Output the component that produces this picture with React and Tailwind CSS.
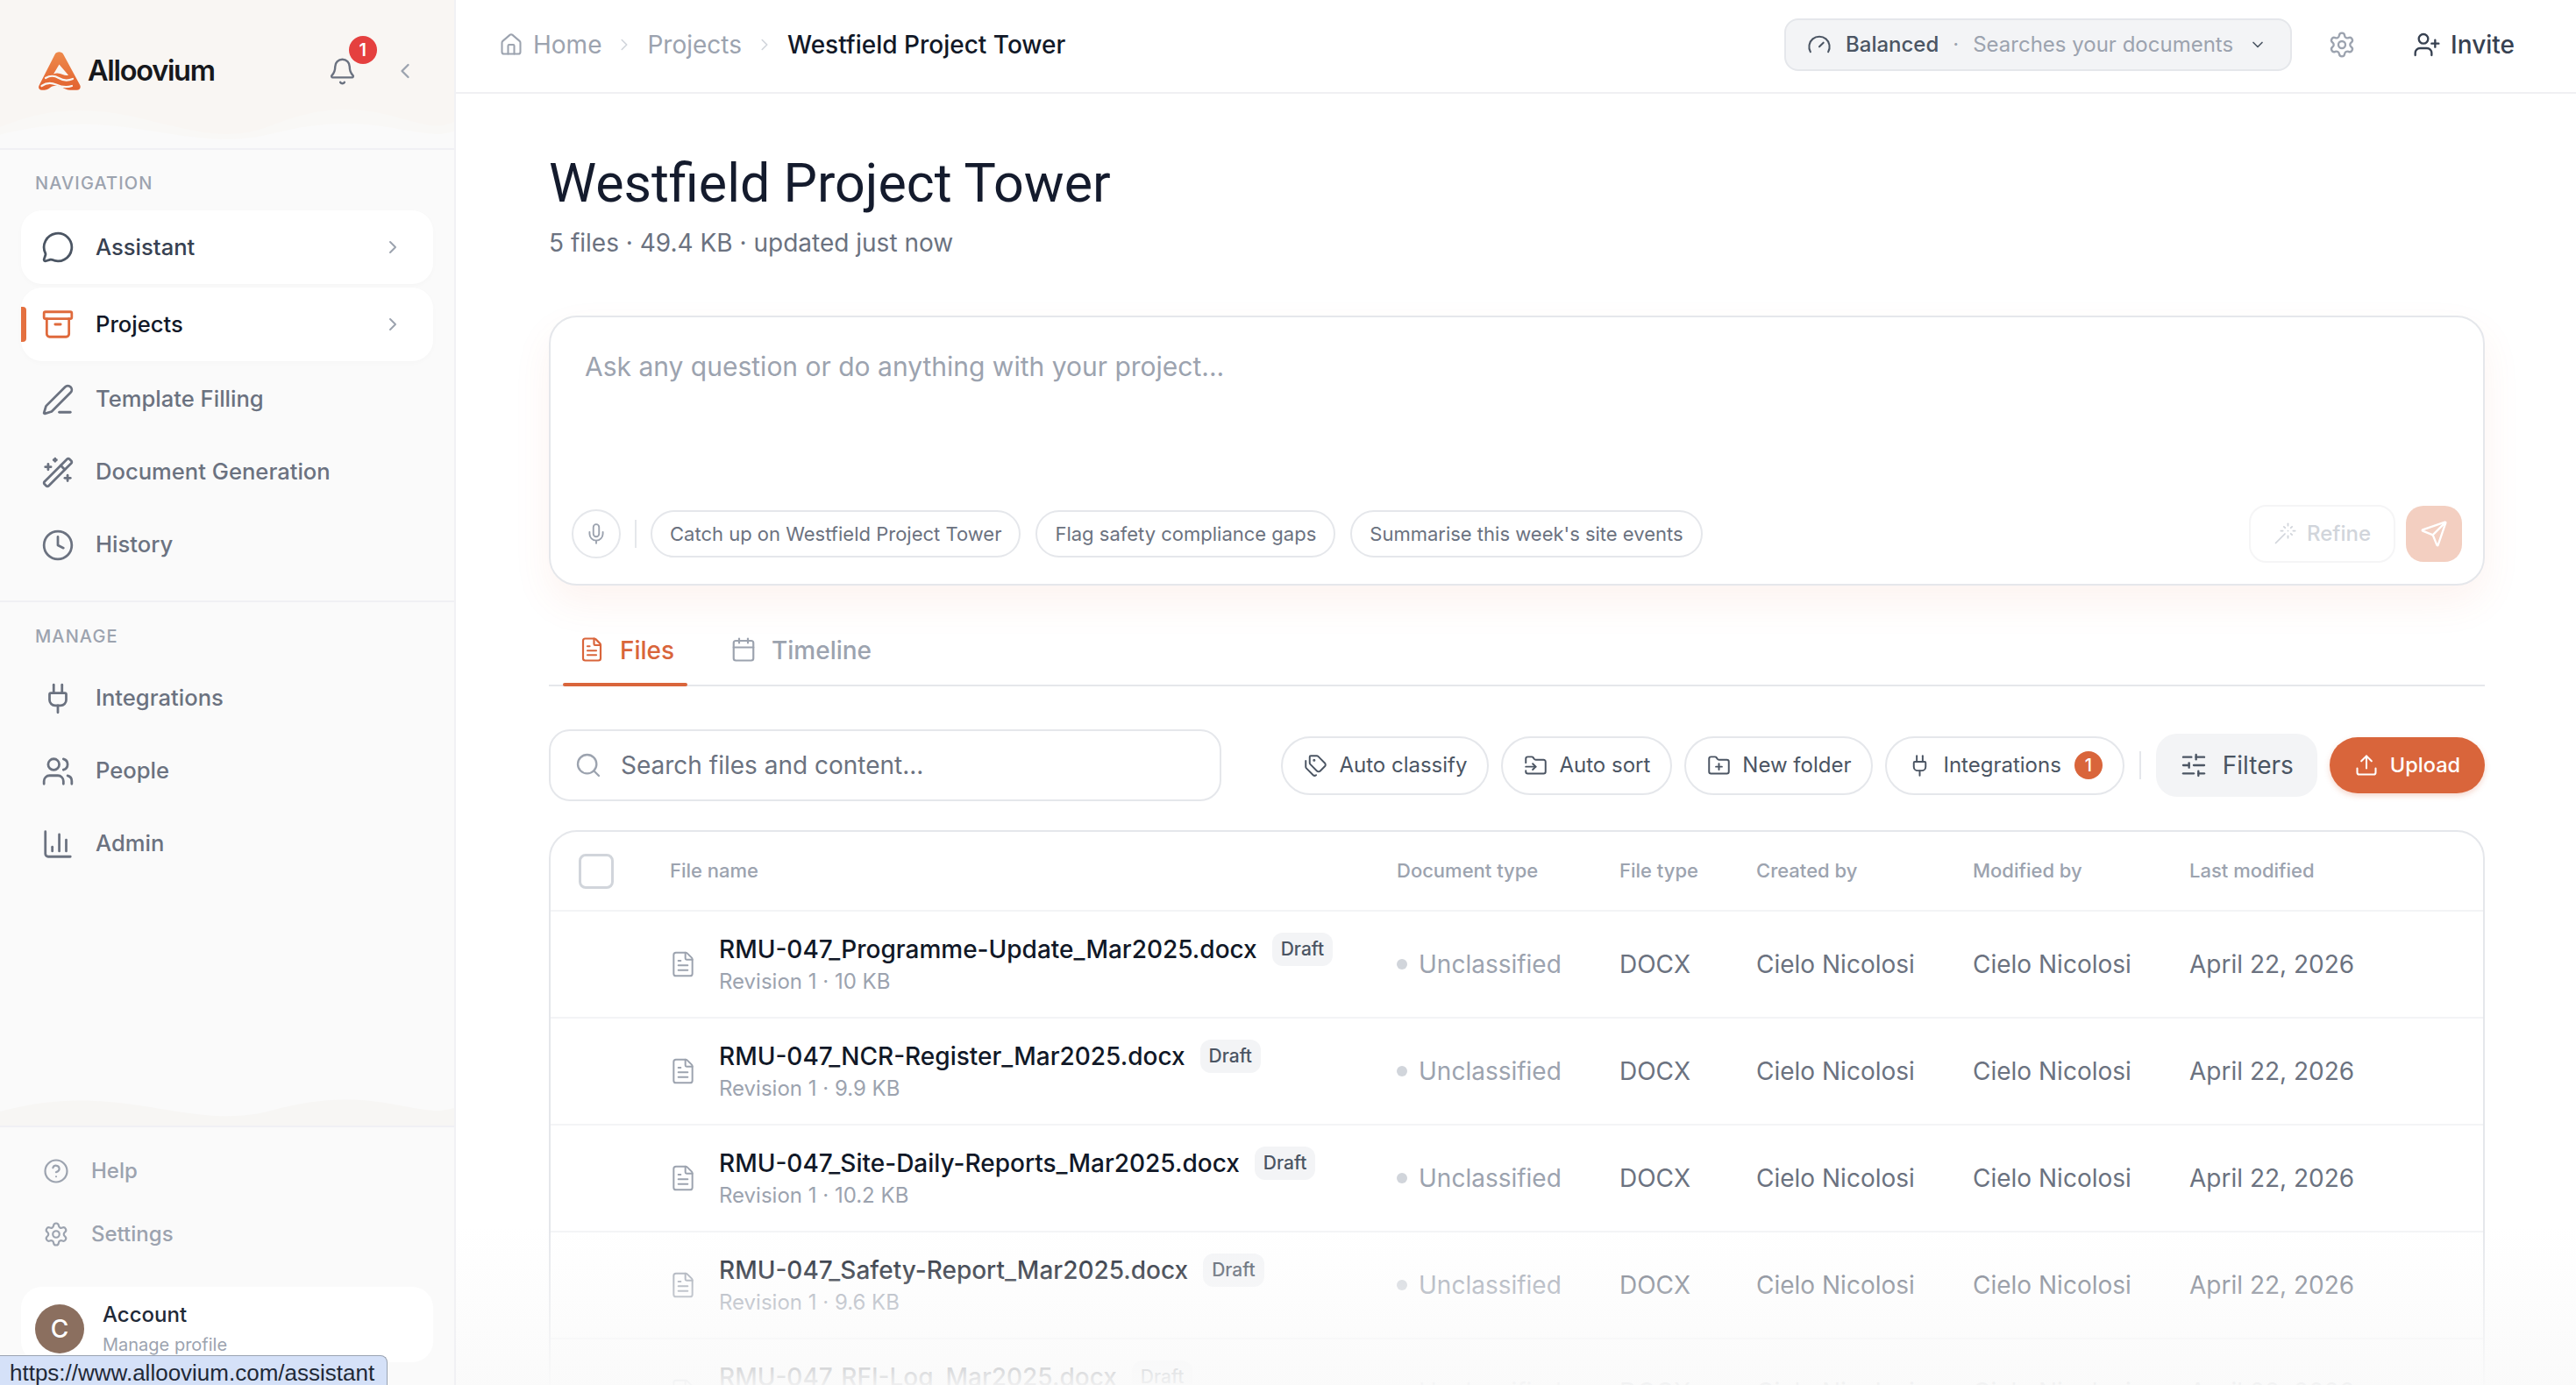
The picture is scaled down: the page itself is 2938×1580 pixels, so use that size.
import {
  Archive, Bell, Calendar, ChartColumn, ChevronDown, ChevronLeft, ChevronRight, CircleHelp, Clock, FileText,
  FolderInput, FolderPlus, Gauge, House, MessageCircle, Mic, PenLine, Plug, Search, Send, Settings,
  SlidersHorizontal, Tags, Upload, UserPlus, Users, Wand, WandSparkles,
} from "lucide-react";

const files = [
  { name: "RMU-047_Programme-Update_Mar2025.docx", size: "10 KB" },
  { name: "RMU-047_NCR-Register_Mar2025.docx", size: "9.9 KB" },
  { name: "RMU-047_Site-Daily-Reports_Mar2025.docx", size: "10.2 KB" },
  { name: "RMU-047_Safety-Report_Mar2025.docx", size: "9.6 KB" },
  { name: "RMU-047_RFI-Log_Mar2025.docx", size: "9.7 KB" },
];

const gridCols = "grid grid-cols-[136px_829px_254px_156px_247px_247px_1fr] items-center";

const Logo = () => (
  <svg viewBox="0 0 48 44" className="w-[48px] h-[44px] shrink-0">
    <defs>
      <linearGradient id="logoGrad" x1="0" y1="0" x2="0" y2="1">
        <stop offset="0" stopColor="#ee8a4c" />
        <stop offset="1" stopColor="#e2622f" />
      </linearGradient>
    </defs>
    <path
      d="M18.5 3.2C20.6-.6 26.4-.6 28.4 3.2L47.2 38c1.5 2.8-.3 5.8-3.5 5.8H36c-3.6 0-6.2-1.6-9.4-3.2-3.6-1.8-7.4-2.6-11-1-3 1.4-5.2 4.2-9 4.2H3.6C.8 43.800-.8 41.200.6 38.600Z"
      fill="url(#logoGrad)"
    />
    <path d="M23.500 14.500 17 25.500c4-2 7.500-.6 10.500.6 2 .8 4.500 1.200 6.500.6Z" fill="#f9f6f3" />
    <path d="M8 30c5-3 10-3 15 0s10 3.500 16 1" stroke="#f9f6f3" strokeWidth="2.200" fill="none" strokeLinecap="round" />
    <path d="M3.500 39c5-3.500 11-4 16.500-1.500s11 4 18 1.500" stroke="#f9f6f3" strokeWidth="2.200" fill="none" strokeLinecap="round" />
  </svg>
);

const Wave = ({ className }) => (
  <svg viewBox="0 0 518 60" preserveAspectRatio="none" className={className}>
    <path d="M0 36C55 14 100 12 160 26S260 54 310 34 400 10 450 24 500 36 518 30V60H0Z" fill="currentColor" />
  </svg>
);

const NavRow = ({ icon: Icon, label, card, active, arrow }) => (
  <div
    className={
      "relative flex items-center pl-[23px] pr-[34px] rounded-[24px] " +
      (card ? "h-[84px] bg-white shadow-[0_2px_6px_rgba(17,24,39,0.02)]" : "h-[79px]")
    }
  >
    {active && <span className="absolute left-0 top-[22px] h-[40px] w-[6px] rounded-r-[4px] bg-[#e4703f]" />}
    <Icon className={"w-[38px] h-[38px] shrink-0 " + (active ? "text-[#df6a3c]" : card ? "text-[#4b5563]" : "text-[#6b7280]")} strokeWidth={1.75} />
    <span
      className={
        "ml-[24px] flex-1 text-[25.600px] font-medium " +
        (active ? "text-[#111827]" : card ? "text-[#374151]" : "text-[#6b7280]")
      }
    >
      {label}
    </span>
    {arrow && <ChevronRight className="w-[24px] h-[24px] text-[#9ca3af]" strokeWidth={2} />}
  </div>
);

const NavLabel = ({ children }) => (
  <div className="pl-[16px] mt-[1px] mb-[18px] h-[26px] leading-[26px] text-[20px] font-medium tracking-[1.1px] text-[#9ca3af] uppercase">
    {children}
  </div>
);

const Sidebar = () => (
  <aside className="relative w-[520px] shrink-0 h-full flex flex-col bg-[#fafafa] border-r-2 border-[#f1f1f4]">
    <div className="relative h-[171px] shrink-0 bg-[#f9f6f3] border-b-2 border-[#f0f0f4] overflow-hidden">
      <Wave className="absolute left-0 bottom-0 w-full h-[60px] text-[#f9f8f6]" />
      <Wave className="absolute left-0 bottom-0 w-full h-[38px] text-[#fafafa]" />
      <div className="relative flex items-center h-[162px] pl-[44px]">
        <Logo />
        <span className="ml-[8px] text-[32.500px] font-semibold tracking-[-1.300px] text-[#17181c]">Alloovium</span>
        <div className="relative ml-[129px]">
          <Bell className="w-[33px] h-[33px] text-[#6b7280]" strokeWidth={1.75} />
          <span className="absolute left-[24px] top-[-24px] w-[32px] h-[32px] rounded-full bg-[#e5403f] text-white text-[20px] font-semibold flex items-center justify-center">
            1
          </span>
        </div>
        <ChevronLeft className="ml-[41px] w-[28px] h-[28px] text-[#9ca3af]" strokeWidth={2} />
      </div>
    </div>

    <div className="px-[24px] pt-[24px] pb-[24px] border-b-2 border-[#f0f0f4]">
      <NavLabel>Navigation</NavLabel>
      <div className="flex flex-col gap-1">
        <NavRow icon={MessageCircle} label="Assistant" card arrow />
        <NavRow icon={Archive} label="Projects" card active arrow />
        <NavRow icon={PenLine} label="Template Filling" />
        <NavRow icon={WandSparkles} label="Document Generation" />
        <NavRow icon={Clock} label="History" />
      </div>
    </div>

    <div className="px-[24px] pt-[25px]">
      <NavLabel>Manage</NavLabel>
      <div className="flex flex-col gap-1">
        <NavRow icon={Plug} label="Integrations" />
        <NavRow icon={Users} label="People" />
        <NavRow icon={ChartColumn} label="Admin" />
      </div>
    </div>

    <div className="mt-auto">
      <Wave className="block w-full h-[40px] text-[#f7f6f4]" />
      <div className="border-t-2 border-[#f0f0f4] px-[24px] pt-[14px] pb-[26px]">
        <div className="flex items-center h-[72px] pl-[25px] text-[#9ca3af]">
          <CircleHelp className="w-[30px] h-[30px]" strokeWidth={1.75} />
          <span className="ml-[25px] text-[24px] font-medium">Help</span>
        </div>
        <div className="flex items-center h-[72px] pl-[25px] text-[#9ca3af]">
          <Settings className="w-[30px] h-[30px]" strokeWidth={1.75} />
          <span className="ml-[25px] text-[24px] font-medium">Settings</span>
        </div>
        <div className="mt-[24px] h-[86px] rounded-[24px] bg-white flex items-start pl-[16px] pt-[20px]">
          <div className="w-[56px] h-[56px] rounded-full bg-[#8b6f5f] text-white text-[28px] font-medium flex items-center justify-center">
            C
          </div>
          <div className="ml-[21px] -mt-[6px]">
            <div className="text-[24px] leading-[36px] font-medium text-[#1f2937]">Account</div>
            <div className="text-[20px] leading-[32px] text-[#9ca3af]">Manage profile</div>
          </div>
        </div>
      </div>
    </div>
  </aside>
);

const Crumbs = () => (
  <div className="flex items-center text-[28px] text-[#9ca3af]">
    <House className="w-[28px] h-[28px] ml-[49px]" strokeWidth={1.75} />
    <span className="ml-[11px]">Home</span>
    <ChevronRight className="w-[22px] h-[22px] mx-[15px] text-[#d1d5db]" strokeWidth={1.75} />
    <span>Projects</span>
    <ChevronRight className="w-[22px] h-[22px] mx-[15px] text-[#d1d5db]" strokeWidth={1.75} />
    <span className="font-medium text-[#111827]">Westfield Project Tower</span>
  </div>
);

const TopBar = () => (
  <header className="h-[107px] shrink-0 flex items-center justify-between border-b-2 border-[#f0f0f3] pb-[4px] pr-[70px]">
    <Crumbs />
    <div className="flex items-center">
      <div className="flex items-center h-[60px] pl-[24px] pr-[27px] rounded-[16px] bg-[#f3f4f6] border-2 border-[#e5e7eb] text-[24px]">
        <Gauge className="w-[28px] h-[28px] text-[#4b5563]" strokeWidth={1.75} />
        <span className="ml-[16px] font-medium text-[#4b5563]">Balanced</span>
        <span className="mx-[16px] text-[#9ca3af]">·</span>
        <span className="text-[#9ca3af]">Searches your documents</span>
        <ChevronDown className="ml-[18px] w-[20px] h-[20px] text-[#4b5563]" strokeWidth={2} />
      </div>
      <Settings className="ml-[41px] w-[32px] h-[32px] text-[#9ca3af]" strokeWidth={1.75} />
      <UserPlus className="ml-[65px] w-[32px] h-[32px] text-[#374151]" strokeWidth={1.75} />
      <span className="ml-[11px] text-[28px] font-medium text-[#374151]">Invite</span>
    </div>
  </header>
);

const Chip = ({ children }) => (
  <span className="flex items-center h-[54px] px-[20px] rounded-full border-2 border-[#e5e7eb] text-[22px] text-[#6b7280] bg-white">
    {children}
  </span>
);

const Composer = () => (
  <div className="mt-[63px] h-[308px] rounded-[32px] border-2 border-[#e5e7eb] bg-white shadow-[0_20px_44px_rgba(224,105,58,0.08)] flex flex-col justify-between px-[24px] pt-[36px] pb-[24px]">
    <div className="ml-[15px] text-[30px] leading-[40px] text-[#9ca3af]">Ask any question or do anything with your project...</div>
    <div className="flex items-center h-[66px]">
      <span className="w-[56px] h-[56px] rounded-full border-2 border-[#e5e7eb] flex items-center justify-center">
        <Mic className="w-[26px] h-[26px] text-[#9ca3af]" strokeWidth={1.75} />
      </span>
      <span className="mx-[16px] w-[2px] h-[32px] bg-[#e5e7eb]" />
      <div className="flex items-center gap-[17px]">
        <Chip>Catch up on Westfield Project Tower</Chip>
        <Chip>Flag safety compliance gaps</Chip>
        <Chip>Summarise this week's site events</Chip>
      </div>
      <div className="ml-auto flex items-center h-[66px] pl-[25px] pr-[26px] rounded-[20px] border-2 border-[#f5f5f6] text-[#d1d5db]">
        <Wand className="w-[28px] h-[28px]" strokeWidth={1.5} />
        <span className="ml-[11px] text-[24px] font-medium">Refine</span>
      </div>
      <span className="ml-[12px] w-[64px] h-[64px] rounded-[20px] bg-[#f3cfc1] flex items-center justify-center">
        <Send className="w-[32px] h-[32px] text-white" strokeWidth={1.75} />
      </span>
    </div>
  </div>
);

const Tabs = () => (
  <div className="mt-[34px] h-[81px] flex border-b-2 border-[#e5e7eb] text-[28px] font-medium">
    <div className="ml-[16px] relative w-[142px] h-[79px] flex items-start pt-[24px] pl-[18px] text-[#d9653b]">
      <FileText className="w-[30px] h-[30px]" strokeWidth={1.75} />
      <span className="ml-[17px] leading-[32px]">Files</span>
      <span className="absolute left-0 right-0 bottom-[-2px] h-[4px] rounded-[2px] bg-[#d9653b]" />
    </div>
    <div className="ml-[49px] flex items-start pt-[24px] text-[#9ca3af]">
      <Calendar className="w-[30px] h-[30px]" strokeWidth={1.75} />
      <span className="ml-[17px] leading-[32px]">Timeline</span>
    </div>
  </div>
);

const Pill = ({ icon: Icon, children }) => (
  <button className="flex items-center h-[67px] pl-[24px] pr-[23px] rounded-full border-2 border-[#e5e7eb] bg-white text-[24px] font-normal text-[#4b5563]">
    <Icon className="w-[27px] h-[27px] mr-[13px]" strokeWidth={1.75} />
    {children}
  </button>
);

const Toolbar = () => (
  <div className="mt-[49px] h-[82px] flex items-center justify-between">
    <div className="w-[767px] h-[82px] rounded-[24px] border-2 border-[#e5e7eb] flex items-center pl-[27px]">
      <Search className="w-[32px] h-[32px] text-[#9ca3af]" strokeWidth={1.75} />
      <span className="ml-[21px] text-[28px] text-[#6b7280]">Search files and content...</span>
    </div>
    <div className="flex items-center">
      <div className="flex items-center gap-[14px]">
        <Pill icon={Tags}>Auto classify</Pill>
        <Pill icon={FolderInput}>Auto sort</Pill>
        <Pill icon={FolderPlus}>New folder</Pill>
        <button className="flex items-center h-[67px] pl-[24px] pr-[23px] rounded-full border-2 border-[#e5e7eb] bg-white text-[24px] font-normal text-[#4b5563]">
          <Plug className="w-[27px] h-[27px] mr-[13px]" strokeWidth={1.75} />
          Integrations
          <span className="ml-[15px] w-[32px] h-[32px] rounded-full bg-[#d9653b] text-white text-[20px] font-medium flex items-center justify-center">1</span>
        </button>
      </div>
      <span className="mx-[17px] w-[2px] h-[32px] bg-[#e5e7eb]" />
      <button className="flex items-center h-[72px] px-[27px] rounded-[24px] bg-[#f3f4f6] text-[28px] font-normal text-[#4b5563]">
        <SlidersHorizontal className="w-[32px] h-[32px] mr-[17px]" strokeWidth={1.75} />
        Filters
      </button>
      <button className="ml-[14px] flex items-center h-[64px] px-[28px] rounded-[32px] bg-[#d9653b] text-[23.500px] font-medium text-white shadow-[0_3px_6px_rgba(217,101,59,0.25)]">
        <Upload className="w-[28px] h-[28px] mr-[13px]" strokeWidth={1.75} />
        Upload
      </button>
    </div>
  </div>
);

const FileRow = ({ file }) => (
  <div className={gridCols + " h-[122px] border-t-2 border-[#f3f4f6] text-[28px]"}>
    <span />
    <div className="flex items-center">
      <FileText className="w-[32px] h-[32px] text-[#9ca3af] ml-[-1px]" strokeWidth={1.5} />
      <div className="ml-[25px]">
        <div className="flex items-center h-[38px]">
          <span className="font-medium text-[#111827]">{file.name}</span>
          <span className="ml-[17px] h-[38px] px-[10px] rounded-[12px] bg-[#f3f4f6] text-[21px] font-medium text-[#4b5563] flex items-center">Draft</span>
        </div>
        <div className="mt-[1px] text-[24px] leading-[34px] text-[#9ca3af]">Revision 1 · {file.size}</div>
      </div>
    </div>
    <div className="flex items-center text-[#9ca3af]">
      <span className="w-[12px] h-[12px] rounded-full bg-[#d1d5db]" />
      <span className="ml-[13px]">Unclassified</span>
    </div>
    <span className="text-[#6b7280]">DOCX</span>
    <span className="text-[#6b7280]">Cielo Nicolosi</span>
    <span className="text-[#6b7280]">Cielo Nicolosi</span>
    <span className="text-[#6b7280]">April 22, 2026</span>
  </div>
);

const FileTable = () => (
  <div className="mt-[33px] rounded-t-[32px] border-2 border-[#e5e7eb]">
    <div className={gridCols + " h-[89px] text-[22px] font-medium text-[#9ca3af]"}>
      <span className="ml-[32px] w-[40px] h-[40px] rounded-[8px] border-[3px] border-[#d1d5db]" />
      <span>File name</span>
      <span>Document type</span>
      <span>File type</span>
      <span>Created by</span>
      <span>Modified by</span>
      <span>Last modified</span>
    </div>
    {files.map((file) => (
      <FileRow key={file.name} file={file} />
    ))}
  </div>
);

const App = () => (
  <div className="relative flex w-full h-screen overflow-hidden bg-white font-[Inter,sans-serif]">
    <Sidebar />
    <main className="relative flex-1 flex flex-col min-w-0 h-full overflow-hidden">
      <TopBar />
      <div className="pl-[106px] pr-[104px]">
        <h1 className="pt-[66px] text-[61px] leading-[72px] font-[Roboto,sans-serif] font-normal text-[#141b2d]">Westfield Project Tower</h1>
        <p className="mt-[12px] text-[28px] leading-[40px] text-[#6b7280]">5 files · 49.4 KB · updated just now</p>
        <Composer />
        <Tabs />
        <Toolbar />
        <FileTable />
      </div>
      <div className="absolute left-0 right-0 bottom-0 h-[180px] bg-gradient-to-b from-transparent to-[#fafafa]/95" />
    </main>
    <div className="absolute left-0 bottom-0 h-[34px] pl-[11px] pr-[14px] pt-[5px] flex items-center rounded-tr-[8px] bg-[#d5e1f8] border-t border-r border-[#9aa3b2] text-[26px] text-[#1f2937] font-['Liberation_Sans',sans-serif]">
      https://www.alloovium.com/assistant
    </div>
  </div>
);

export default App;
